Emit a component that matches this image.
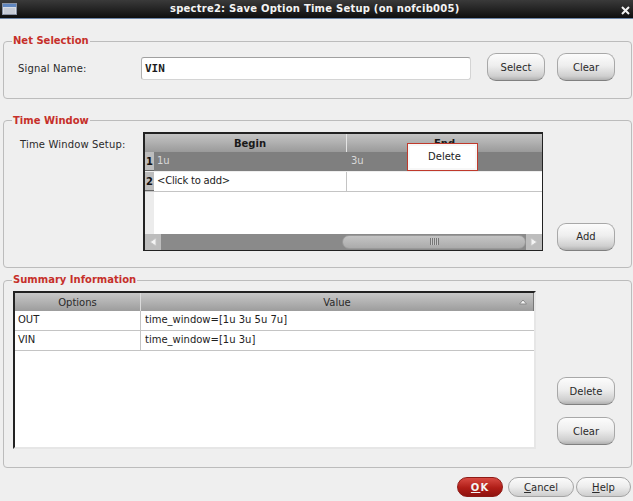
<div class="win">
  <header class="title">
    <svg class="appicon" width="16" height="14" viewBox="0 0 16 14">
      <rect x="0.5" y="1.5" width="14" height="11" fill="#d8dde6" stroke="#8a94a6"/>
      <rect x="1" y="2" width="13" height="3" fill="#5f86c0"/>
      <path d="M2 7h11M2 9h11M2 11h11" stroke="#b4bac6"/>
    </svg>
    <span class="title-text">spectre2: Save Option Time Setup (on nofcib005)</span>
    <svg class="close" width="9" height="9" viewBox="0 0 9 9"><path d="M1 1l7 7M8 1l-7 7" stroke="#f2f2f2" stroke-width="2"/></svg>
  </header>

  <main class="body">
    <fieldset class="group net">
      <legend>Net Selection</legend>
      <div class="net-row">
        <span class="label signal">Signal Name:</span>
        <div class="input">VIN</div>
        <button class="btn first">Select</button>
        <button class="btn second">Clear</button>
      </div>
    </fieldset>

    <fieldset class="group time">
      <legend>Time Window</legend>
      <div class="time-row">
        <span class="label setup">Time Window Setup:</span>
        <div class="ttable">
          <div class="thead">
            <div class="corner"></div>
            <div class="th begin">Begin</div>
            <div class="th end">End</div>
          </div>
          <div class="trow sel">
            <div class="rownum">1</div>
            <div class="td begin">1u</div>
            <div class="td end">3u</div>
          </div>
          <div class="trow">
            <div class="rownum">2</div>
            <div class="td begin click">&lt;Click to add&gt;</div>
            <div class="td end"></div>
          </div>
          <div class="tfill"><div class="gutter"></div></div>
          <div class="hscroll">
            <div class="arrow"><svg width="10" height="10" viewBox="0 0 10 10"><path d="M8 1v8L2 5z" fill="#f4f4f4" stroke="#c4c4c4"/></svg></div>
            <div class="track">
              <div class="thumb"><span class="grip"></span></div>
            </div>
            <div class="arrow"><svg width="10" height="10" viewBox="0 0 10 10"><path d="M2 1v8l6-4z" fill="#f4f4f4" stroke="#c4c4c4"/></svg></div>
          </div>
          <div class="popup">Delete</div>
        </div>
        <div class="add-col"><button class="btn">Add</button></div>
      </div>
    </fieldset>

    <fieldset class="group summary">
      <legend>Summary Information</legend>
      <div class="sum-row">
        <div class="stable">
          <div class="shead">
            <div class="sh opt">Options</div>
            <div class="sh val">Value
              <svg class="sort" width="8" height="6" viewBox="0 0 8 6"><path d="M0.500 5L4 1l3.500 4z" fill="#f8f8f8" stroke="#888"/></svg>
            </div>
          </div>
          <div class="srow"><div class="sd opt">OUT</div><div class="sd val">time_window=[1u 3u 5u 7u]</div></div>
          <div class="srow"><div class="sd opt">VIN</div><div class="sd val">time_window=[1u 3u]</div></div>
        </div>
        <div class="sum-btns">
          <button class="btn">Delete</button>
          <button class="btn">Clear</button>
        </div>
      </div>
    </fieldset>
  </main>

  <footer class="foot">
    <button class="pill ok"><u>O</u>K</button>
    <button class="pill cancel"><u>C</u>ancel</button>
    <button class="pill help"><u>H</u>elp</button>
  </footer>
</div>

<style>
  :global(body) { margin: 0; background: #efefef; }
  .win {
    width: 633px; height: 501px; overflow: hidden; display: flex; flex-direction: column;
    background: #efefef; font-family: "DejaVu Sans", sans-serif; font-size: 10px; color: #222;
  }
  .title {
    height: 19px; box-sizing: border-box; flex: none; display: flex; align-items: center; position: relative;
    background: linear-gradient(#3a3a3a, #0e0e0e); border-bottom: 1px solid #6d86a8;
    color: #f4f4f4; font-weight: bold; font-size: 10px;
  }
  .appicon { margin-left: 2px; }
  .title-text { position: absolute; left: 170px; top: 3px; letter-spacing: 0.23px; white-space: nowrap; }
  .close { position: absolute; left: 621px; top: 6px; }

  .body { flex: 1; display: flex; flex-direction: column; padding: 16px 1px 0 3px; min-height: 0; }
  .group {
    margin: 0; padding: 0; border: 1px solid #bcbcbc; border-radius: 4px; min-width: 0;
  }
  legend {
    margin-left: 8px; padding: 0 1px; color: #c62f2a; font-weight: bold; font-size: 10px; line-height: 12px;
  }
  .net { height: 64px; box-sizing: border-box; }
  .net-row { display: flex; align-items: flex-start; padding-top: 8px; }
  .label { font-size: 10px; color: #2a2a2a; letter-spacing: 0.15px; }
  .signal { width: 122px; padding-left: 14px; box-sizing: border-box; margin-top: 8px; flex: none; margin-right: 15px; }
  .input {
    width: 330px; height: 23px; box-sizing: border-box; margin-top: 2px; flex: none;
    background: #fff; border: 1px solid #d4d4d4; border-top-color: #a0a0a0; border-left-color: #b0b0b0; border-radius: 3px;
    font-family: "DejaVu Sans Mono", monospace; font-weight: bold; font-size: 11px; padding: 4px 0 0 3px; color: #1c1c1c;
  }
  .btn {
    width: 58px; height: 28px; box-sizing: border-box; padding: 0; flex: none;
    border: 1px solid #a8a8a8; border-bottom-color: #808080; border-radius: 9px;
    background: linear-gradient(#fcfcfc 0%, #eeeeee 45%, #cfcfcf 85%, #b0b0b0 100%);
    font: 10px "DejaVu Sans", sans-serif; color: #2a2a2a;
  }
  .btn.first { margin-left: 16px; margin-top: -2px; }
  .btn.second { margin-left: 12px; margin-top: -2px; }

  .time { height: 154px; box-sizing: border-box; margin-top: 16px; }
  .time-row { display: flex; align-items: flex-start; padding-top: 5px; }
  .setup { width: 139px; box-sizing: border-box; padding-left: 16px; padding-top: 7px; flex: none; white-space: nowrap; }
  .ttable {
    width: 400px; height: 119px; box-sizing: border-box; flex: none; position: relative;
    border: 2px solid #222; border-bottom-width: 1px; border-right-width: 1px;
    background: #fff; display: flex; flex-direction: column;
  }
  .thead { height: 18px; display: flex; flex: none; background: linear-gradient(#c4c4c4, #9a9a9a); }
  .corner { width: 9px; flex: none; }
  .th { font-weight: bold; font-size: 10px; text-align: center; line-height: 20px; color: #1a1a1a; box-sizing: border-box; }
  .th.begin { width: 193px; border-right: 1px solid #e4e4e4; }
  .th.end { flex: 1; }
  .trow { height: 20px; display: flex; flex: none; border-bottom: 1px solid #c4c4c4; box-sizing: border-box; }
  .trow.sel { background: #7f7f7f; color: #d8d8d8; border-bottom: 1px solid #eee; }
  .rownum {
    width: 9px; flex: none; background: #bdbdbd; font-weight: bold; font-size: 10px; text-align: center; line-height: 20px; color: #111;
    border-bottom: 1px solid #666; box-sizing: border-box;
  }
  .td { box-sizing: border-box; padding: 3px 0 0 3px; line-height: 12px; white-space: nowrap; }
  .td.click { letter-spacing: -0.2px; }
  .td.begin { width: 193px; border-right: 1px solid #c4c4c4; }
  .sel .td.begin { border-right-color: #7f7f7f; }
  .sel .td.end { padding-left: 4px; }
  .td.end { flex: 1; }
  .tfill { flex: 1; display: flex; min-height: 0; }
  .gutter { width: 9px; background: #ececec; }
  .hscroll { height: 16px; flex: none; display: flex; background: #c8c8c8; }
  .arrow { width: 16px; flex: none; display: flex; align-items: center; justify-content: center; background: #bdbdbd; }
  .track { flex: 1; background: #8a8a8a; position: relative; display: flex; justify-content: flex-end; }
  .thumb {
    width: 184px; height: 14px; margin-top: 1px; border-radius: 7px; background: linear-gradient(#c4c4c4, #ababab);
    border: 1px solid #999; box-sizing: border-box; display: flex; align-items: center; justify-content: center;
  }
  .grip {
    width: 9px; height: 7px;
    background: repeating-linear-gradient(90deg, #777 0 1px, #c8c8c8 1px 2px);
  }
  .popup {
    position: absolute; left: 262px; top: 9px; width: 71px; height: 28px; box-sizing: border-box;
    background: #fff; border: 1px solid #c0392b; padding-left: 4px;
    text-align: center; line-height: 26px; font-size: 10px; color: #222;
    box-shadow: inset 0 0 0 2px #f7f7f7;
  }
  .add-col { margin-left: 14px; padding-top: 91px; }

  .summary { height: 194px; box-sizing: border-box; margin-top: 6px; }
  .sum-row { display: flex; align-items: flex-start; padding-top: 5px; }
  .stable {
    width: 523px; height: 158px; box-sizing: border-box; margin-left: 9px; flex: none;
    background: #fff; border-left: 2px solid #222; border-top: 2px solid #222;
    border-right: 2px solid #e6e6e6; border-bottom: 2px solid #e6e6e6;
  }
  .shead { height: 18px; display: flex; background: linear-gradient(#c8c8c8, #9c9c9c); }
  .sh { font-size: 10px; text-align: center; line-height: 20px; color: #2a2a2a; box-sizing: border-box; position: relative; }
  .opt { width: 126px; flex: none; border-right: 1px solid #dadada; box-sizing: border-box; }
  .val { flex: 1; }
  .sh.val { border-right: 1px solid #777; }
  .sort { position: absolute; right: 6px; top: 6px; }
  .srow { height: 20px; display: flex; border-bottom: 1px solid #c4c4c4; box-sizing: border-box; }
  .sd { padding: 3px 0 0 3px; line-height: 12px; box-sizing: border-box; white-space: nowrap; }
  .sd.opt { border-right-color: #c4c4c4; }
  .sd.val { padding-left: 4px; }
  .sum-btns { display: flex; flex-direction: column; gap: 12px; margin-left: 21px; padding-top: 86px; }

  .foot { height: 33px; flex: none; position: relative; display: flex; justify-content: flex-end; gap: 2px; padding: 9px 2px 0 0; box-sizing: border-box; }
  .pill {
    height: 20px; box-sizing: border-box; padding: 0; border-radius: 10px; border: 1px solid #a4a4a4;
    background: linear-gradient(#fbfbfb, #ececec 50%, #cdcdcd);
    font: 10px "DejaVu Sans", sans-serif; color: #2a2a2a;
  }
  .ok { width: 46px; margin-right: 3px; background: linear-gradient(#d84a42, #b01d17 55%, #8f1310); border-color: #8e1a16; color: #f4f4f4; font-weight: bold; letter-spacing: 1px; }
  .cancel { width: 66px; }
  .help { width: 55px; }
</style>
